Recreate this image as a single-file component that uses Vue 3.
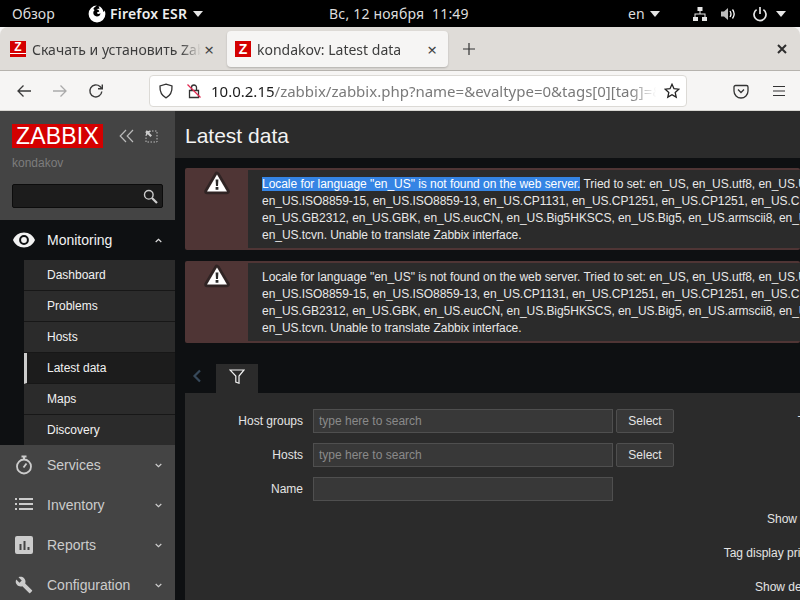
<script setup>
const subItems = [
  { name: 'Dashboard' },
  { name: 'Problems' },
  { name: 'Hosts' },
  { name: 'Latest data', active: true },
  { name: 'Maps' },
  { name: 'Discovery' }
];

const line2 = 'en_US.ISO8859-15, en_US.ISO8859-13, en_US.CP1131, en_US.CP1251, en_US.CP1251, en_US.CP1251, en_US.KOI8-R';
const line3 = 'en_US.GB2312, en_US.GBK, en_US.eucCN, en_US.Big5HKSCS, en_US.Big5, en_US.armscii8, en_US.cp1251';
const line4 = 'en_US.tcvn. Unable to translate Zabbix interface.';
const tried = ' Tried to set: en_US, en_US.utf8, en_US.UTF-8, en_US.iso885915';
const localeText = 'Locale for language "en_US" is not found on the web server.';

const messages = [{ selected: true }, { selected: false }];
const filterRows = [
  { label: 'Host groups', placeholder: 'type here to search', select: true },
  { label: 'Hosts', placeholder: 'type here to search', select: true },
  { label: 'Name', placeholder: '', select: false }
];
</script>

<template>
  <div class="screen">
    <header class="gnome">
      <span class="overview">Обзор</span>
      <svg class="fx" width="18" height="18" viewBox="0 0 18 18">
        <path fill="#fff" d="M9 .6a8.4 8.4 0 1 0 8.4 8.4c0-1.3-.3-2.6-.9-3.7-.1 1-.5 1.500-1 1.800C15 4 13 1.500 10.500 1.200c.7 1 1 2 .9 3-.9-.6-2.200-.5-3 .1 1.600.1 2.700.9 2.800 2.200-.7.6-1.300.7-2 .8-.3.500-.2 1 .3 1.500 1.100.3 2.100-.2 3-.6-.1 2-1.800 3.400-3.700 3.300C6.700 11.300 5.300 9.700 5.300 8c0-1.200.5-2.200 1.300-3-.5-.2-1-.5-1.200-1.300C6.500 2 8 1.200 9 .6z" />
      </svg>
      <span class="app-name">Firefox ESR</span>
      <i class="tri app-tri"></i>
      <span class="clock">Вс, 12 ноября&nbsp;&nbsp;11:49</span>
      <span class="lang">en</span>
      <i class="tri lang-tri"></i>
      <svg class="net" width="16" height="16" viewBox="0 0 16 16" fill="#e6e6e6">
        <rect x="5.500" y="1" width="5" height="4" />
        <rect x="1" y="11" width="5" height="4" />
        <rect x="10" y="11" width="5" height="4" />
        <path d="M7.500 5h1v2.500h5V11h-1V8.500h-9V11h-1V7.500h5z" />
      </svg>
      <svg class="vol" width="16" height="16" viewBox="0 0 16 16">
        <path fill="#bbb" d="M1 5.500h3L8 2v12l-4-3.500H1z" />
        <path fill="none" stroke="#fff" stroke-width="1.300" d="M10 5c1.200 1.800 1.200 4.200 0 6M12.500 3.500c2 2.700 2 6.300 0 9" />
      </svg>
      <svg class="pow" width="16" height="16" viewBox="0 0 16 16" fill="none" stroke="#e6e6e6" stroke-width="1.700">
        <path d="M8 1v7" />
        <path d="M4.600 3.600a6 6 0 1 0 6.800 0" />
      </svg>
      <i class="tri pow-tri"></i>
    </header>

    <div class="browser">
      <div class="tabstrip">
        <div class="tab">
          <span class="favicon underlined">Z</span>
          <span class="tab-title">Скачать и установить Zabbix</span>
          <span class="tab-close">×</span>
        </div>
        <div class="tab current">
          <span class="favicon">Z</span>
          <span class="tab-title">kondakov: Latest data</span>
          <span class="tab-close">×</span>
        </div>
        <svg class="plus" width="14" height="14" viewBox="0 0 14 14" stroke="#333" stroke-width="1.200">
          <path d="M7 1v12M1 7h12" />
        </svg>
        <svg class="win-close" width="10" height="10" viewBox="0 0 10 10" stroke="#2e2e2e" stroke-width="2">
          <path d="M1 1l8 8M9 1l-8 8" />
        </svg>
      </div>
      <div class="toolbar">
        <svg class="nav-icon" width="16" height="16" viewBox="0 0 16 16" fill="none" stroke="#3a3a3a" stroke-width="1.300">
          <path d="M15 8H2M7.500 2.500L2 8l5.500 5.500" />
        </svg>
        <svg class="nav-icon fwd" width="16" height="16" viewBox="0 0 16 16" fill="none" stroke="#aaa" stroke-width="1.300">
          <path d="M1 8h13M8.500 2.500L14 8l-5.500 5.500" />
        </svg>
        <svg class="nav-icon reload" width="16" height="16" viewBox="0 0 16 16" fill="none" stroke="#3a3a3a" stroke-width="1.400">
          <path d="M13.800 8.500A6 6 0 1 1 12 3.600L14 5.500" />
          <path d="M14.300 1.500v4.300H10" />
        </svg>
        <div class="urlbar">
          <svg class="shield" width="16" height="16" viewBox="0 0 16 16" fill="none" stroke="#333" stroke-width="1.300">
            <path d="M8 1.200L14 3c.3 5.500-1.500 9.500-6 11.800C3.500 12.500 1.700 8.500 2 3z" />
          </svg>
          <svg class="lock" width="16" height="16" viewBox="0 0 16 16" fill="none">
            <path stroke="#333" stroke-width="1.300" d="M3.500 7.500h9v7h-9zM5.500 7.500V4.500a2.500 2.500 0 0 1 5 0v3" />
            <path stroke="#e22850" stroke-width="1.300" d="M1.500 1.500l13 13" />
          </svg>
          <span class="url"><b>10.0.2.15</b>/zabbix/zabbix.php?name=&amp;evaltype=0&amp;tags[0][tag]=&amp;tags</span>
          <svg class="star" width="16" height="16" viewBox="0 0 16 16" fill="none" stroke="#222" stroke-width="1.300">
            <path d="M8 1.300l2 4.400 4.800.5-3.600 3.200 1 4.700L8 11.700l-4.200 2.400 1-4.700L1.200 6.200 6 5.700z" />
          </svg>
        </div>
        <svg class="pocket" width="16" height="16" viewBox="0 0 16 16" fill="none" stroke="#333" stroke-width="1.300">
          <path d="M2.500 2.500h11A1.500 1.500 0 0 1 15 4v4a7 7 0 0 1-14 0V4a1.500 1.500 0 0 1 1.500-1.500z" />
          <path d="M5 6.500l3 3 3-3" />
        </svg>
        <svg class="burger" width="14" height="12" viewBox="0 0 14 12" stroke="#333" stroke-width="1.200">
          <path d="M1 1.500h12M1 6h12M1 10.500h12" />
        </svg>
      </div>
    </div>

    <div class="page">
      <aside class="sidebar">
        <div class="brand">
          <div class="brand-row">
            <span class="logo">ZABBIX</span>
            <svg class="collapse" width="15" height="14" viewBox="0 0 15 14" fill="none" stroke="#bbb" stroke-width="1.200">
              <path d="M7 1L1.200 7 7 13M14 1L8.200 7 14 13" />
            </svg>
            <svg class="expand" width="13" height="13" viewBox="0 0 13 13" fill="none">
              <rect x="1" y="1" width="11" height="11" stroke="#bbb" stroke-dasharray="1.500 1.500" />
              <path fill="#ccc" d="M1 1h5L4.300 2.700 7 5.400 5.400 7 2.700 4.300 1 6z" />
            </svg>
          </div>
          <div class="user">kondakov</div>
          <div class="search">
            <svg width="15" height="15" viewBox="0 0 15 15" fill="none" stroke="#ccc">
              <circle cx="5.800" cy="5.800" r="4.300" stroke-width="1.400" />
              <path stroke-width="2.200" d="M9 9l5 5" />
            </svg>
          </div>
        </div>

        <nav>
          <div class="nav-open">
            <div class="nav-item">
              <svg class="nav-ico" width="24" height="24" viewBox="0 0 24 24">
                <path fill="#f2f2f2" fill-rule="evenodd" d="M12 4.500c5 0 9.300 3 11 7.500-1.700 4.500-6 7.500-11 7.500S2.700 16.500 1 12c1.700-4.500 6-7.500 11-7.500zm0 2.600a4.900 4.900 0 1 0 0 9.800 4.900 4.900 0 0 0 0-9.800zm0 2a2.900 2.900 0 1 1 0 5.800 2.900 2.900 0 0 1 0-5.800z" />
              </svg>
              <span class="nav-label bright">Monitoring</span>
              <svg class="chev" width="7" height="5" viewBox="0 0 7 5" fill="none" stroke="#ddd" stroke-width="1.200">
                <path d="M.7 4L3.500 1.300 6.300 4" />
              </svg>
            </div>
            <ul class="subnav">
              <li v-for="item in subItems" :key="item.name" :class="{ active: item.active }">{{ item.name }}</li>
            </ul>
          </div>

          <div class="nav-item">
            <svg class="nav-ico" width="24" height="24" viewBox="0 0 24 24" fill="none" stroke="#ccc">
              <circle cx="12" cy="13.500" r="7" stroke-width="1.800" />
              <path stroke-width="2" d="M9.500 3.500h5M12 4v2.500" />
              <path stroke-width="1.800" d="M11.500 14.500l3-4" />
            </svg>
            <span class="nav-label">Services</span>
            <svg class="chev" width="7" height="5" viewBox="0 0 7 5" fill="none" stroke="#ccc" stroke-width="1.200">
              <path d="M.7 1L3.500 3.700 6.300 1" />
            </svg>
          </div>
          <div class="nav-item">
            <svg class="nav-ico" width="24" height="24" viewBox="0 0 24 24" fill="#ccc">
              <path d="M3 5h2v2H3zM7 5h14v2H7zM3 10h2v2H3zM7 10h14v2H7zM3 15h2v2H3zM7 15h14v2H7z" />
            </svg>
            <span class="nav-label">Inventory</span>
            <svg class="chev" width="7" height="5" viewBox="0 0 7 5" fill="none" stroke="#ccc" stroke-width="1.200">
              <path d="M.7 1L3.500 3.700 6.300 1" />
            </svg>
          </div>
          <div class="nav-item">
            <svg class="nav-ico" width="24" height="24" viewBox="0 0 24 24">
              <path fill="#ccc" fill-rule="evenodd" d="M5 3h14a2 2 0 0 1 2 2v14a2 2 0 0 1-2 2H5a2 2 0 0 1-2-2V5a2 2 0 0 1 2-2zm2.500 8v6h2v-6zm4-3v9h2V8zm4 6v3h2v-3z" />
            </svg>
            <span class="nav-label">Reports</span>
            <svg class="chev" width="7" height="5" viewBox="0 0 7 5" fill="none" stroke="#ccc" stroke-width="1.200">
              <path d="M.7 1L3.500 3.700 6.300 1" />
            </svg>
          </div>
          <div class="nav-item">
            <svg class="nav-ico" width="24" height="24" viewBox="0 0 24 24">
              <path fill="#ccc" transform="translate(3 3) scale(.75)" d="M22.700 19l-9.100-9.100c.9-2.300.4-5-1.500-6.900-2-2-5-2.400-7.400-1.300L9 6 6 9 1.600 4.700C.4 7.100.9 10.100 2.900 12.100c1.900 1.900 4.600 2.400 6.900 1.500l9.100 9.100c.4.400 1 .4 1.400 0l2.300-2.300c.5-.4.500-1.100.1-1.400z" />
            </svg>
            <span class="nav-label">Configuration</span>
            <svg class="chev" width="7" height="5" viewBox="0 0 7 5" fill="none" stroke="#ccc" stroke-width="1.200">
              <path d="M.7 1L3.500 3.700 6.300 1" />
            </svg>
          </div>
        </nav>
      </aside>

      <main class="content">
        <div class="title-bar"><h1>Latest data</h1></div>

        <div class="messages">
          <div v-for="(msg, i) in messages" :key="i" class="msg">
            <div class="msg-icon">
              <svg width="28" height="26" viewBox="0 0 28 26">
                <path fill="#302424" stroke="#302424" stroke-width="5.500" stroke-linejoin="round" d="M14 4.500L24 21.500H4z" />
                <path fill="#fff" d="M14 4.500L24 21.500H4z" />
                <path fill="#2b2b2b" d="M12.600 9.500h2.800l-.4 6.500h-2zM12.600 17h2.800v2.800h-2.800z" />
              </svg>
            </div>
            <div class="msg-text">
              <div><span :class="{ selected: msg.selected }">{{ localeText }}</span>{{ tried }}</div>
              <div>{{ line2 }}</div>
              <div>{{ line3 }}</div>
              <div>{{ line4 }}</div>
            </div>
          </div>
        </div>

        <div class="filter-tabs">
          <svg class="filter-back" width="10" height="14" viewBox="0 0 10 14" fill="none" stroke="#37495a" stroke-width="2.200">
            <path d="M8 1.500L2.500 7 8 12.500" />
          </svg>
          <div class="filter-tab">
            <svg width="16" height="15" viewBox="0 0 16 15" fill="none" stroke="#f2f2f2" stroke-width="1.200">
              <path d="M1 1h14L10 7v7.200L6.800 13V7z" />
            </svg>
          </div>
        </div>

        <section class="filter">
          <div class="filter-left">
            <div v-for="row in filterRows" :key="row.label" class="form-row">
              <label>{{ row.label }}</label>
              <div class="fake-input">{{ row.placeholder }}</div>
              <button v-if="row.select" type="button">Select</button>
            </div>
          </div>
          <div class="filter-right">
            <label>Tags</label>
            <label class="show-tags">Show tags</label>
            <label>Tag display priority</label>
            <label>Show details</label>
          </div>
        </section>
      </main>
    </div>
  </div>
</template>

<style>
html, body {
  margin: 0;
  background: #000;
}
</style>

<style scoped>
.screen {
  width: 800px;
  height: 600px;
  overflow: hidden;
  display: flex;
  flex-direction: column;
  font-family: "Liberation Sans", Arial, sans-serif;
  font-size: 12px;
}

/* gnome top bar */
.gnome {
  height: 27px;
  flex: none;
  background: #000;
  color: #ddd;
  display: flex;
  align-items: center;
  font-family: "Noto Sans", sans-serif;
  font-size: 14px;
  white-space: nowrap;
}
.overview { margin-left: 12px; width: 76px; }
.fx { flex: none; }
.app-name { margin-left: 4px; font-weight: 600; color: #eee; width: 78px; letter-spacing: .2px; }
.tri {
  width: 0;
  height: 0;
  border-left: 5.5px solid transparent;
  border-right: 5.5px solid transparent;
  border-top: 6px solid #e6e6e6;
  flex: none;
}
.app-tri { margin-left: 5px; }
.clock { margin-left: 126px; width: 141px; letter-spacing: .2px; }
.lang { margin-left: 158px; width: 17px; }
.lang-tri { margin-left: 5px; }
.net { margin-left: 32px; flex: none; }
.vol { margin-left: 12px; flex: none; }
.pow { margin-left: 16px; flex: none; }
.pow-tri { margin-left: 8px; }

/* browser chrome */
.browser {
  flex: none;
  background: #f6f5f4;
  border-bottom: 1px solid #d8d6d2;
}
.tabstrip {
  height: 43px;
  background: #dfdcd8;
  border-radius: 8px 8px 0 0;
  border-bottom: 1px solid #b6b3ae;
  display: flex;
  align-items: center;
  font-family: "Noto Sans", sans-serif;
  font-size: 14px;
  color: #3d3d3d;
}
.tab {
  width: 221px;
  height: 36px;
  margin-top: 1px;
  margin-left: 4px;
  padding: 0 8px 0 6px;
  box-sizing: border-box;
  display: flex;
  align-items: center;
  border-radius: 4px;
  flex: none;
}
.tab.current {
  background: #f6f5f4;
  margin-left: 2px;
  padding-left: 8px;
  box-shadow: 0 1px 2px rgba(0, 0, 0, .2);
}
.favicon {
  width: 16px;
  height: 16px;
  flex: none;
  background: #d40000;
  color: #fff;
  font: bold 14px/16px "Liberation Sans", sans-serif;
  text-align: center;
  overflow: hidden;
}
.favicon.underlined { box-shadow: inset 0 -3px 0 #d40000, inset 0 -4px 0 #fff; line-height: 13px; font-size: 12px; }
.tab-title {
  margin-left: 6px;
  flex: 1;
  min-width: 0;
  overflow: hidden;
  white-space: nowrap;
  -webkit-mask-image: linear-gradient(to right, #000 88%, transparent);
  mask-image: linear-gradient(to right, #000 88%, transparent);
}
.tab-close {
  width: 14px;
  margin-left: 1px;
  margin-right: 1px;
  flex: none;
  text-align: center;
  font-size: 17px;
  line-height: 17px;
  color: #444;
}
.plus { margin-left: 14px; flex: none; }
.win-close { margin-left: auto; margin-right: 13px; flex: none; }

.toolbar {
  height: 38px;
  padding-top: 1px;
  display: flex;
  align-items: center;
}
.nav-icon { margin-left: 16px; flex: none; }
.nav-icon.fwd { margin-left: 20px; }
.nav-icon.reload { margin-left: 20px; }
.urlbar {
  width: 538px;
  height: 32px;
  margin-left: 45px;
  box-sizing: border-box;
  background: #fff;
  border: 1px solid #dcdad6;
  border-radius: 4px;
  display: flex;
  align-items: center;
  flex: none;
}
.shield { margin-left: 8px; flex: none; }
.lock { margin-left: 12px; flex: none; }
.url {
  margin-left: 9px;
  width: 450px;
  flex: none;
  overflow: hidden;
  white-space: nowrap;
  font-family: "Noto Sans", sans-serif;
  font-size: 15px;
  color: #7a7a7a;
  -webkit-mask-image: linear-gradient(to right, #000 93%, transparent 99%);
  mask-image: linear-gradient(to right, #000 93%, transparent 99%);
}
.url b { font-weight: 400; color: #1c1c1c; }
.star { margin-left: 3px; flex: none; }
.pocket { margin-left: 46px; flex: none; }
.burger { margin-left: 23px; flex: none; }

/* zabbix page */
.page {
  flex: 1;
  min-height: 0;
  display: flex;
  background: #0e1012;
}
.sidebar {
  width: 175px;
  flex: none;
  background: #444;
  color: #ccc;
}
.brand {
  height: 109px;
  padding: 13px 12px 0;
  box-sizing: border-box;
}
.brand-row {
  display: flex;
  align-items: center;
}
.logo {
  width: 91px;
  height: 24px;
  background: #d40000;
  color: #fff;
  font-size: 23px;
  line-height: 25px;
  letter-spacing: .2px;
  text-align: center;
  overflow: hidden;
}
.collapse { margin-left: 16px; flex: none; }
.expand { margin-left: 11px; flex: none; }
.user {
  margin-top: 8px;
  color: #7d7d7d;
  line-height: 14px;
}
.search {
  margin-top: 14px;
  width: 151px;
  height: 24px;
  box-sizing: border-box;
  background: #1c1c1c;
  border: 1px solid #0c0c0c;
  border-radius: 2px;
  display: flex;
  align-items: center;
  justify-content: flex-end;
  padding-right: 4px;
}
.nav-open { background: #0e1012; }
.nav-item {
  height: 40px;
  display: flex;
  align-items: center;
  padding-left: 12px;
  font-size: 14px;
}
.nav-ico { flex: none; }
.nav-label { margin-left: 11px; flex: 1; }
.nav-label.bright { color: #f2f2f2; }
.chev { margin-right: 13px; flex: none; }
.subnav {
  list-style: none;
  margin: 0 0 0 24px;
  padding: 0;
  background: #2b2b2b;
  color: #f2f2f2;
}
.subnav li {
  height: 30px;
  line-height: 30px;
  padding-left: 23px;
  border-bottom: 1px solid #171717;
}
.subnav li:last-child { border-bottom: 0; }
.subnav li.active {
  background: #1c1c1c;
  padding-left: 20px;
  border-left: 3px solid #ccc;
}

.content {
  flex: 1;
  min-width: 0;
  overflow: hidden;
  color: #f2f2f2;
}
.title-bar {
  height: 47px;
  box-sizing: border-box;
  padding: 2px 0 0 10px;
  background: #2b2b2b;
  display: flex;
  align-items: center;
}
h1 {
  margin: 0;
  font-size: 21px;
  font-weight: 400;
}
.messages {
  margin: 10px 0 0 10px;
  display: flex;
  flex-direction: column;
  gap: 11px;
}
.msg {
  height: 82px;
  box-sizing: border-box;
  display: flex;
  background: #4f3535;
  border-radius: 2px;
  padding: 2px 0;
}
.msg-icon {
  width: 63px;
  flex: none;
  display: flex;
  justify-content: center;
  align-items: flex-start;
  box-sizing: border-box;
}
.msg-text {
  flex: 1;
  min-width: 0;
  overflow: hidden;
  background: #2b2b2b;
  padding: 6px 0 0 14px;
  line-height: 17px;
  letter-spacing: -.04px;
  color: #e8e8e8;
  white-space: pre;
}
.selected {
  background: #3584e4;
  color: #fff;
}
.filter-tabs {
  margin: 21px 0 0 17px;
  height: 29px;
  display: flex;
  align-items: center;
}
.filter-back { flex: none; margin-top: -5px; }
.filter-tab {
  width: 42px;
  height: 29px;
  margin-left: 14px;
  background: #2b2b2b;
  display: flex;
  justify-content: center;
  padding-top: 5px;
  box-sizing: border-box;
}
.filter {
  margin-left: 10px;
  height: 207px;
  background: #2b2b2b;
  display: flex;
  padding-top: 16px;
  box-sizing: border-box;
}
.filter-left {
  width: 489px;
  flex: none;
  display: flex;
  flex-direction: column;
  gap: 10px;
}
.form-row {
  height: 24px;
  display: flex;
  align-items: center;
}
.form-row label {
  width: 118px;
  flex: none;
  text-align: right;
  color: #e4e4e4;
}
.fake-input {
  width: 300px;
  height: 24px;
  margin-left: 10px;
  box-sizing: border-box;
  background: #383838;
  border: 1px solid #4f4f4f;
  color: #8a8a8a;
  line-height: 22px;
  padding-left: 5px;
  flex: none;
}
button {
  width: 58px;
  height: 24px;
  margin-left: 3px;
  box-sizing: border-box;
  background: #383838;
  border: 1px solid #4f4f4f;
  border-radius: 2px;
  color: #e4e4e4;
  font: inherit;
  padding: 0;
  flex: none;
}
.filter-right {
  flex: none;
  width: 149px;
  display: flex;
  flex-direction: column;
  gap: 10px;
  white-space: nowrap;
  color: #e4e4e4;
}
.filter-right label {
  height: 24px;
  line-height: 24px;
  text-align: right;
  display: block;
}
.show-tags { margin-top: 64px; }
</style>
